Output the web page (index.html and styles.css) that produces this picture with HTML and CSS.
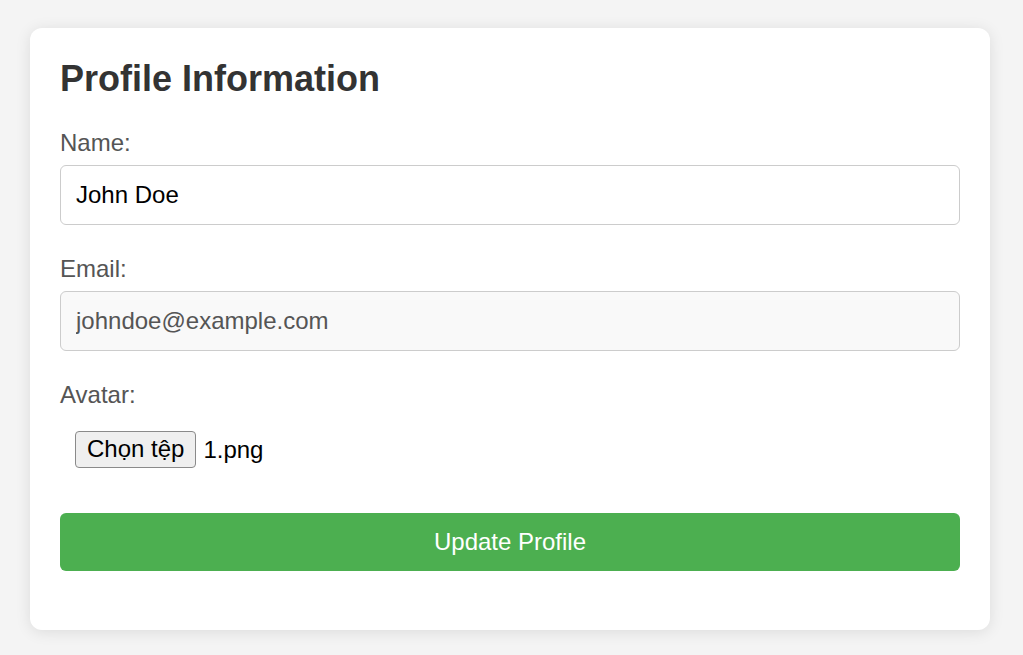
FILE: index.html
```html
<!DOCTYPE html>
<html lang="en">
<head>
<meta charset="utf-8">
<title>Profile Information</title>
<link rel="stylesheet" href="styles.css">
</head>
<body>
<div class="card">
  <h2 class="title">Profile Information</h2>
  <form class="form">
    <div class="group">
      <label class="label" for="name">Name:</label>
      <input class="field" id="name" type="text" value="John Doe">
    </div>
    <div class="group">
      <label class="label" for="email">Email:</label>
      <input class="field field-readonly" id="email" type="email" value="johndoe@example.com" readonly>
    </div>
    <div class="group">
      <label class="label">Avatar:</label>
      <div class="file">
        <button type="button" class="file-btn">Chọn tệp</button><span class="file-name">1.png</span>
      </div>
    </div>
    <div class="group">
      <button type="button" class="submit">Update Profile</button>
    </div>
  </form>
</div>
</body>
</html>
```

FILE: styles.css
```css
html, body {
  margin: 0;
  padding: 0;
}
body {
  background: #f4f4f4;
  font-family: "Liberation Sans", Arial, sans-serif;
  font-size: 24px;
  padding: 28px 30px;
}
.card {
  width: 900px;
  padding: 30px 30px 29px;
  background: #fff;
  border-radius: 12px;
  box-shadow: 0 2px 15px rgba(0, 0, 0, 0.1);
}
.title {
  margin: 0 0 29px;
  font-size: 36px;
  font-weight: bold;
  color: #333;
  line-height: normal;
}
.form {
  display: flex;
  flex-direction: column;
}
.group {
  display: flex;
  flex-direction: column;
  margin-bottom: 30px;
}
.label {
  color: #555;
  font-size: 24px;
  line-height: normal;
  margin-bottom: 8px;
}
.field {
  font-family: inherit;
  font-size: 24px;
  line-height: normal;
  color: #000;
  padding: 15px;
  border: 1px solid #ccc;
  border-radius: 6px;
  background: #fff;
  outline: none;
  margin: 0;
}
.field-readonly {
  background: #f9f9f9;
  color: #555;
}
.file {
  display: flex;
  align-items: center;
  padding: 14px 15px 15px;
}
.file-btn {
  font-family: inherit;
  font-size: 24px;
  line-height: normal;
  color: #000;
  background: #efefef;
  border: 1px solid #8a8a8a;
  border-radius: 4px;
  padding: 3px 11px 4px;
  margin: 0 7px 0 0;
}
.file-name {
  color: #000;
  line-height: normal;
}
.submit {
  font-family: inherit;
  font-size: 24px;
  line-height: normal;
  color: #fff;
  background: #4caf50;
  border: none;
  border-radius: 6px;
  padding: 15px;
  margin: 0;
  width: 100%;
}
```
